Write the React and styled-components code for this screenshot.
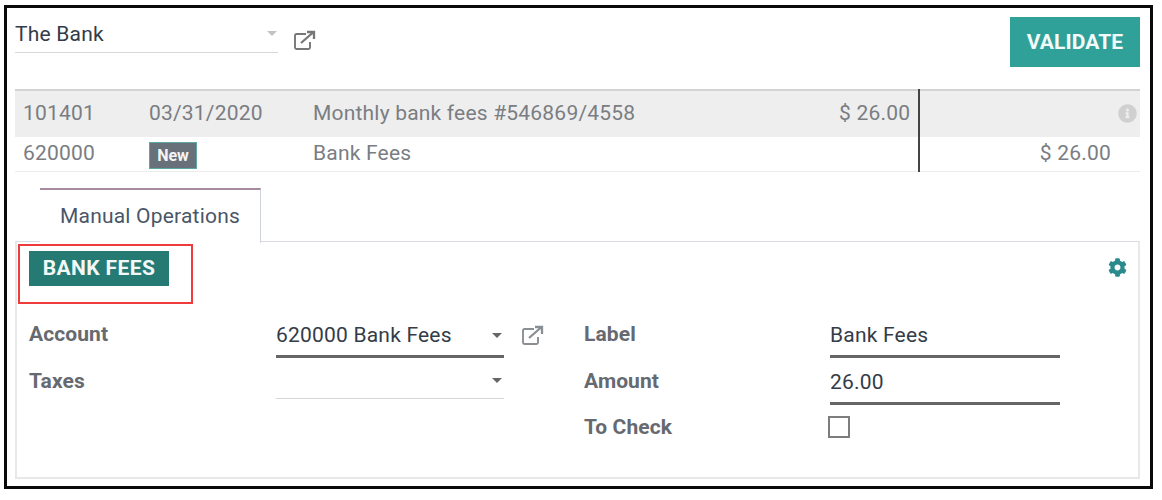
import React from "react";
import styled, { createGlobalStyle } from "styled-components";
import { FaCog, FaInfoCircle } from "react-icons/fa";

const GlobalStyle = createGlobalStyle`
  html, body {
    margin: 0;
    padding: 0;
    background: #fff;
  }
  body {
    font-family: Roboto, "Liberation Sans", sans-serif;
  }
`;

const Page = styled.div`
  width: 1162px;
  height: 500px;
  padding: 5px 0 0 4px;
  box-sizing: border-box;
  overflow: hidden;
`;

const Frame = styled.div`
  width: 1149px;
  height: 484px;
  box-sizing: border-box;
  border: 3px solid #0a0a0a;
  padding: 0 10px 0 8px;
  background: #fff;
`;

const TopBar = styled.div`
  display: flex;
  justify-content: space-between;
  align-items: flex-start;
  height: 81px;
`;

const PartnerGroup = styled.div`
  display: flex;
  align-items: flex-start;
  padding-top: 8px;
`;

const PartnerSelect = styled.div`
  width: 263px;
  height: 37px;
  box-sizing: border-box;
  border-bottom: 1px solid #d8d8d8;
  display: flex;
  justify-content: space-between;
  font-size: 21px;
  letter-spacing: 0.2px;
  line-height: 25px;
  padding-top: 6px;
  color: #333c48;
`;

const Caret = styled.span`
  width: 0;
  height: 0;
  margin: ${(p) => p.$margin};
  border-left: 5.5px solid transparent;
  border-right: 5.5px solid transparent;
  border-top: 5.5px solid ${(p) => p.$color || "#666"};
`;

const LinkIcon = styled.svg`
  width: 23px;
  height: 20px;
  margin: ${(p) => p.$margin};
  fill: none;
  stroke: ${(p) => p.$color};
  stroke-width: 1.9;
`;

const ValidateButton = styled.button`
  width: 130px;
  height: 50px;
  margin-top: 9px;
  border: none;
  border-radius: 0;
  background: #30a199;
  color: #f3fbfa;
  font-family: inherit;
  font-weight: 700;
  font-size: 21px;
  letter-spacing: 0.1px;
  padding: 0;
`;

const Rows = styled.div`
  position: relative;
  border-top: 2px solid #d3d3d3;
`;

const Divider = styled.div`
  position: absolute;
  left: 903px;
  top: -2px;
  bottom: 0;
  width: 2px;
  background: #444;
`;

const Row = styled.div`
  display: grid;
  grid-template-columns: 126px 164px 526px 71px 1fr;
  align-items: center;
  height: ${(p) => p.$height}px;
  box-sizing: border-box;
  padding: 0 0 2px 8px;
  background: ${(p) => (p.$shaded ? "#eeeeee" : "#fff")};
  border-bottom: ${(p) => (p.$shaded ? "none" : "1px solid #ececec")};
  color: #7a7d82;
  font-size: 21px;
  letter-spacing: 0.2px;
`;

const Amount = styled.span`
  text-align: right;
  white-space: nowrap;
`;

const CreditAmount = styled.span`
  grid-column: 5;
  text-align: right;
  padding-right: 29px;
`;

const InfoSlot = styled.span`
  grid-column: 5;
  display: flex;
  justify-content: flex-end;
  color: #d0d0d0;
  font-size: 19px;
  padding-right: 3px;
`;

const NewBadge = styled.span`
  justify-self: start;
  width: 48px;
  height: 27px;
  margin-top: 4px;
  box-sizing: border-box;
  border: 1px solid #5aa9a3;
  background: #68717a;
  color: #f4f4f4;
  font-weight: 700;
  font-size: 16px;
  letter-spacing: 0;
  line-height: 25px;
  text-align: center;
`;

const TabBar = styled.div`
  display: flex;
  padding: 16px 0 0 25px;
  height: 70px;
  box-sizing: border-box;
`;

const Tab = styled.div`
  width: 221px;
  height: 55px;
  box-sizing: border-box;
  border-top: 2px solid #a58aa0;
  border-right: 1px solid #cfd3da;
  background: #fff;
  color: #4a5668;
  font-size: 21px;
  letter-spacing: 0.2px;
  line-height: 52px;
  text-align: center;
  position: relative;
  z-index: 1;
`;

const Panel = styled.div`
  position: relative;
  height: 238px;
  box-sizing: border-box;
  border: 2px solid #e8e8e8;
  border-top: 1px solid #d9dce2;
  margin-top: -1px;
  padding: 2px 0 0 1px;
`;

const PanelHead = styled.div`
  display: flex;
  justify-content: space-between;
  align-items: flex-start;
`;

const PresetHighlight = styled.div`
  width: 175px;
  height: 60px;
  box-sizing: border-box;
  border: 2px solid #ee3b3b;
  padding: 5px 0 0 9px;
`;

const PresetButton = styled.button`
  display: block;
  width: 140px;
  height: 35px;
  border: none;
  border-radius: 0;
  padding: 0 0 2px;
  background: #257a73;
  color: #f1f8f7;
  font-family: inherit;
  font-weight: 700;
  font-size: 21px;
  letter-spacing: 0.4px;
`;

const SettingsIcon = styled(FaCog)`
  color: #2a8a8e;
  font-size: 19px;
  margin: 14px 11px 0 0;
`;

const FormGrid = styled.div`
  display: grid;
  grid-template-columns: 247px 228px 80px 246px 230px;
  grid-auto-rows: 46.5px;
  padding: 19px 0 0 11px;
`;

const FieldLabel = styled.div`
  grid-column: ${(p) => p.$col};
  margin-top: -1px;
  font-weight: 700;
  font-size: 21px;
  letter-spacing: 0.1px;
  line-height: 24px;
  color: #666a70;
`;

const FieldValue = styled.div`
  grid-column: ${(p) => p.$col};
  display: flex;
  justify-content: space-between;
  height: ${(p) => (p.$muted ? 31 : 37)}px;
  margin-top: -2px;
  box-sizing: border-box;
  padding-top: 1px;
  border-bottom: ${(p) => (p.$muted ? "1px solid #d6d6d6" : "3px solid #666")};
  color: #333c48;
  font-size: 21px;
  letter-spacing: 0.2px;
  line-height: 26px;
`;

const LinkSlot = styled.div`
  grid-column: 3;
`;

const Checkbox = styled.div`
  grid-column: ${(p) => p.$col};
  width: 22px;
  height: 22px;
  margin-left: -2px;
  box-sizing: border-box;
  border: 2px solid #7d7d7d;
`;

const External = ({ margin, color }) => (
  <LinkIcon viewBox="0 0 23 20" $margin={margin} $color={color}>
    <path d="M13 4H3.5A1.5 1.5 0 0 0 2 5.5v12A1.5 1.5 0 0 0 3.5 19h12a1.5 1.5 0 0 0 1.5-1.5V12" />
    <path d="M8 13 20 2.5M14 2h7v7" strokeWidth="2.3" />
  </LinkIcon>
);

const App = () => (
  <Page>
    <GlobalStyle />
    <Frame>
      <TopBar>
        <PartnerGroup>
          <PartnerSelect>
            The Bank
            <Caret $color="#c4c4c4" $margin="9px 1px 0 0" />
          </PartnerSelect>
          <External margin="14px 0 0 15px" color="#777" />
        </PartnerGroup>
        <ValidateButton>VALIDATE</ValidateButton>
      </TopBar>

      <Rows>
        <Divider />
        <Row $shaded $height={46}>
          <span>101401</span>
          <span>03/31/2020</span>
          <span>Monthly bank fees #546869/4558</span>
          <Amount>$ 26.00</Amount>
          <InfoSlot>
            <FaInfoCircle />
          </InfoSlot>
        </Row>
        <Row $height={35}>
          <span>620000</span>
          <NewBadge>New</NewBadge>
          <span>Bank Fees</span>
          <CreditAmount>$ 26.00</CreditAmount>
        </Row>
      </Rows>

      <TabBar>
        <Tab>Manual Operations</Tab>
      </TabBar>

      <Panel>
        <PanelHead>
          <PresetHighlight>
            <PresetButton>BANK FEES</PresetButton>
          </PresetHighlight>
          <SettingsIcon />
        </PanelHead>

        <FormGrid>
          <FieldLabel $col={1}>Account</FieldLabel>
          <FieldValue $col={2}>
            620000 Bank Fees
            <Caret $margin="11px 2px 0 0" />
          </FieldValue>
          <LinkSlot>
            <External margin="2px 0 0 17px" color="#8a8f94" />
          </LinkSlot>
          <FieldLabel $col={4}>Label</FieldLabel>
          <FieldValue $col={5}>Bank Fees</FieldValue>

          <FieldLabel $col={1}>Taxes</FieldLabel>
          <FieldValue $col={2} $muted>
            <span />
            <Caret $margin="9px 2px 0 0" />
          </FieldValue>
          <FieldLabel $col={4}>Amount</FieldLabel>
          <FieldValue $col={5}>26.00</FieldValue>

          <FieldLabel $col={4}>To Check</FieldLabel>
          <Checkbox $col={5} />
        </FormGrid>
      </Panel>
    </Frame>
  </Page>
);

export default App;
